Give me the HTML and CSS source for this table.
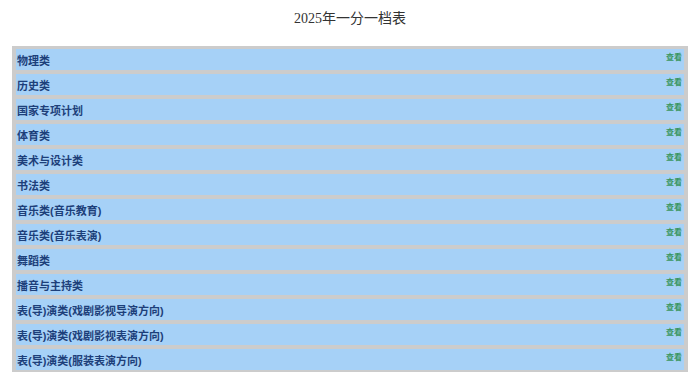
FILE: index.html
```html
<!DOCTYPE html>
<html lang="zh-CN">
<head>
<meta charset="utf-8">
<title>2025年一分一档表</title>
<link rel="stylesheet" href="styles.css">
</head>
<body>
<h1 class="title">2025年一分一档表</h1>
<div class="table">
  <div class="row"><span class="name">物理类</span><a class="view">查看</a></div>
  <div class="row"><span class="name">历史类</span><a class="view">查看</a></div>
  <div class="row"><span class="name">国家专项计划</span><a class="view">查看</a></div>
  <div class="row"><span class="name">体育类</span><a class="view">查看</a></div>
  <div class="row"><span class="name">美术与设计类</span><a class="view">查看</a></div>
  <div class="row"><span class="name">书法类</span><a class="view">查看</a></div>
  <div class="row"><span class="name">音乐类(音乐教育)</span><a class="view">查看</a></div>
  <div class="row"><span class="name">音乐类(音乐表演)</span><a class="view">查看</a></div>
  <div class="row"><span class="name">舞蹈类</span><a class="view">查看</a></div>
  <div class="row"><span class="name">播音与主持类</span><a class="view">查看</a></div>
  <div class="row"><span class="name">表(导)演类(戏剧影视导演方向)</span><a class="view">查看</a></div>
  <div class="row"><span class="name">表(导)演类(戏剧影视表演方向)</span><a class="view">查看</a></div>
  <div class="row"><span class="name">表(导)演类(服装表演方向)</span><a class="view">查看</a></div>
</div>
</body>
</html>
```
FILE: styles.css
```css
html, body {
  margin: 0;
  padding: 0;
  background: #ffffff;
}
body {
  padding: 0 12px;
}
.title {
  margin: 0;
  height: 46px;
  padding-top: 10px;
  box-sizing: border-box;
  text-align: center;
  font-family: "Liberation Serif", "Noto Sans CJK SC", serif;
  font-weight: normal;
  font-size: 14px;
  line-height: 18px;
  color: #333333;
}
.table {
  background: #cccccc;
  padding: 3px 4px 2px 4px;
  display: flex;
  flex-direction: column;
  gap: 4px;
}
.row {
  height: 21px;
  background: #a6d1f7;
  display: flex;
  align-items: center;
  justify-content: space-between;
  padding: 0 2px 0 1px;
}
.name {
  font-family: "Liberation Sans", "Noto Sans CJK SC", sans-serif;
  font-weight: bold;
  font-size: 11px;
  color: #1d3f7a;
  line-height: 14px;
  padding-top: 3px;
}
.view {
  font-family: "Liberation Sans", "Noto Sans CJK SC", sans-serif;
  font-weight: bold;
  font-size: 8px;
  color: #3a9660;
  line-height: 10px;
  margin-top: -3px;
}
```
